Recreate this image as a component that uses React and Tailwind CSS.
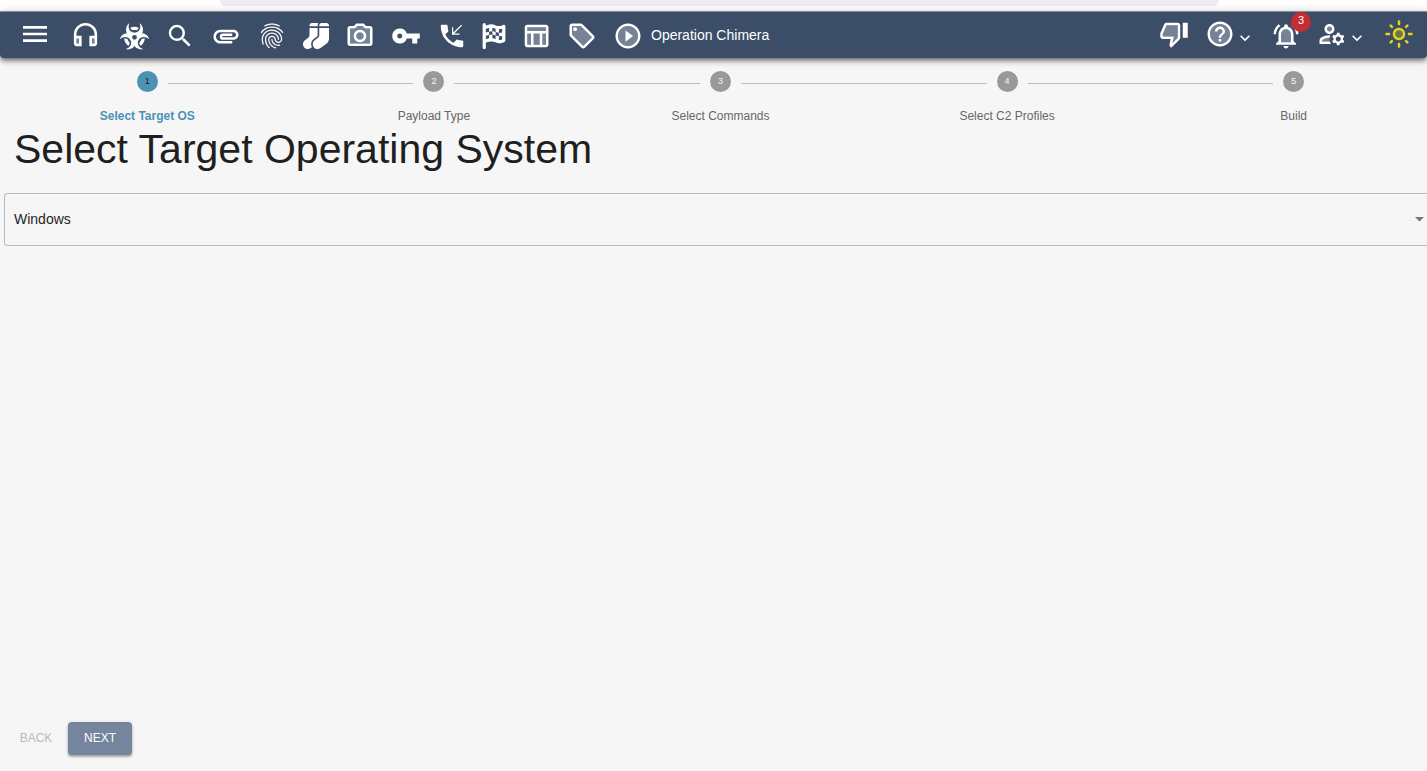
import React from "react";
import {
  MdMenu, MdOutlineHeadphones, MdSearch, MdAttachment, MdFingerprint, MdOutlineCameraAlt, MdVpnKey,
  MdPhoneCallback, MdOutlineTableChart, MdOutlineLocalOffer, MdPlayCircleOutline, MdOutlineThumbDown,
  MdHelpOutline, MdOutlineNotificationsActive, MdOutlineManageAccounts, MdOutlineLightMode, MdExpandMore,
} from "react-icons/md";
import { FaBiohazard, FaSocks, FaFlagCheckered } from "react-icons/fa6";

function Duo({ icon: Icon, tint, size = 30 }) {
  return (
    <svg width={size} height={size} viewBox="0 0 24 24" fill="currentColor" aria-hidden="true">
      <path d={tint} opacity="0.3" />
      <Icon size={24} />
    </svg>
  );
}

const disc = "M12 4a8 8 0 1 0 0 16 8 8 0 0 0 0-16z";

const tools = [
  { label: "Search", width: "w-[46px]", icon: <MdSearch size={30} /> },
  { label: "Files", width: "w-[46px]", icon: <MdAttachment size={30} /> },
  { label: "Artifacts", width: "w-[46px]", icon: <MdFingerprint size={30} /> },
  { label: "Proxies", width: "w-[42px]", icon: <FaSocks size={26} /> },
  { label: "Screenshots", width: "w-[46px]", icon: <Duo icon={MdOutlineCameraAlt} tint="M20 6h-4.05l-1.83-2H9.88L8.05 6H4v12h16V6z" /> },
  { label: "Credentials", width: "w-[46px]", icon: <MdVpnKey size={30} /> },
  { label: "Callbacks", width: "w-[46px]", icon: <MdPhoneCallback size={30} /> },
  { label: "Reporting", width: "w-[38px]", icon: <FaFlagCheckered size={26} /> },
  { label: "Attack matrix", width: "w-[46px]", icon: <Duo icon={MdOutlineTableChart} tint="M5 5h15v14H5z" /> },
  { label: "Tags", width: "w-[46px]", icon: <Duo icon={MdOutlineLocalOffer} tint="M11 4H4v7l9 9.01L20 13z" /> },
  { label: "Event feed", width: "w-[46px]", icon: <Duo icon={MdPlayCircleOutline} tint={disc} /> },
];

const steps = ["Select Target OS", "Payload Type", "Select Commands", "Select C2 Profiles", "Build"];

function IconButton({ label, width, children }) {
  return (
    <button type="button" aria-label={label} className={`flex shrink-0 items-center justify-center ${width}`}>
      {children}
    </button>
  );
}

function NavBar() {
  return (
    <header className="relative flex h-[47px] items-center rounded-b border-t border-[#8b9098] bg-[#3c4d67] pt-0.5 text-white shadow-[0_2px_4px_-1px_rgba(0,0,0,0.45),0_4px_5px_rgba(0,0,0,0.2),0_1px_10px_rgba(0,0,0,0.2)]">
      <nav className="flex items-center pl-3">
        <div className="flex items-center pb-1">
          <IconButton label="Menu" width="w-[46px]"><MdMenu size={32} /></IconButton>
          <IconButton label="Payloads" width="w-[54px]">
            <Duo icon={MdOutlineHeadphones} size={31} tint="M5 15h2v4H5zM17 15h2v4h-2z" />
          </IconButton>
        </div>
        <IconButton label="Hazards" width="w-[45px]"><FaBiohazard size={29} /></IconButton>
        {tools.map((t) => (
          <IconButton key={t.label} label={t.label} width={t.width}>{t.icon}</IconButton>
        ))}
      </nav>
      <a href="#operation" className="whitespace-nowrap pb-0.5 text-sm">Operation Chimera</a>
      <div className="ml-auto flex items-center pb-1 pr-1">
        <IconButton label="Feedback" width="w-[46px]">
          <Duo icon={MdOutlineThumbDown} tint="M3 12v2h9l-1.34 5.34L15 15V5H6z" />
        </IconButton>
        <button type="button" aria-label="Help" className="flex w-[66px] items-center justify-center">
          <Duo icon={MdHelpOutline} tint={disc} />
          <MdExpandMore size={20} className="mt-2" />
        </button>
        <button type="button" aria-label="Notifications, 3 new" className="relative flex w-[46px] justify-center pt-1">
          <Duo icon={MdOutlineNotificationsActive} tint="M12 6.5c-2.49 0-4 2.02-4 4.5v6h8v-6c0-2.48-1.51-4.5-4-4.5z" />
          <span className="absolute -right-0.5 -top-[5px] flex h-5 w-5 justify-center rounded-full bg-[#c52d32] text-[11px] leading-4">3</span>
        </button>
        <button type="button" aria-label="Account" className="flex w-[66px] items-center justify-center">
          <Duo icon={MdOutlineManageAccounts} tint="M10 6a2 2 0 1 0 0 4 2 2 0 0 0 0-4zM4.35 15.62A.98.98 0 0 0 4 16.48V18h6.08a7 7 0 0 1 .63-4.97c-2.55-.24-4.85 1.37-6.36 2.59z" />
          <MdExpandMore size={20} className="mt-2" />
        </button>
        <button type="button" aria-label="Toggle theme" className="flex w-12 justify-center text-[#e8d11c]">
          <Duo icon={MdOutlineLightMode} tint="M12 9a3 3 0 1 0 0 6 3 3 0 0 0 0-6z" />
        </button>
      </div>
    </header>
  );
}

function Stepper() {
  const line = "mt-1 h-px flex-1";
  return (
    <ol className="-mr-[10px] flex pl-1 pt-[13px]">
      {steps.map((s, i) => (
        <li key={s} className="flex-1" aria-current={i === 0 ? "step" : undefined}>
          <div className="flex items-center gap-[10px]">
            <span className={i === 0 ? line : `${line} bg-[#bdbdbd]`} />
            <span className={i === 0
              ? "flex h-[21px] w-[21px] items-center justify-center rounded-full bg-[#4b92b5] text-[9px] text-[#1c1c1c]"
              : "flex h-[21px] w-[21px] items-center justify-center rounded-full bg-[#999999] text-[9px] text-[#f5f5f5]"}>
              {i + 1}
            </span>
            <span className={i === steps.length - 1 ? line : `${line} bg-[#bdbdbd]`} />
          </div>
          <p className={i === 0
            ? "mt-4 text-center text-xs font-bold text-[#4b92b5]"
            : "mt-4 text-center text-xs text-[#666666]"}>
            {s}
          </p>
        </li>
      ))}
    </ol>
  );
}

export default function App() {
  return (
    <div className="flex min-h-screen flex-col overflow-hidden bg-[#f6f6f6] font-['Liberation_Sans',Arial,sans-serif] text-[#1f1f1f]">
      <div className="h-[11px] bg-white pl-[220px] pr-[208px]">
        <div className="h-[6px] rounded-b-lg bg-[#ececf1]" />
      </div>
      <NavBar />
      <main className="flex flex-1 flex-col">
        <Stepper />
        <h1 className="pl-[14px] pt-px text-[41px] leading-[48px]">Select Target Operating System</h1>
        <div className="relative ml-1 mt-5">
          <select aria-label="Target operating system" defaultValue="Windows" className="h-[53px] w-full appearance-none rounded-l border border-r-0 border-[#bababa] bg-transparent pb-0.5 pl-[9px] pr-6 text-sm">
            <option>Windows</option>
            <option>Linux</option>
            <option>macOS</option>
          </select>
          <svg className="pointer-events-none absolute right-[3px] top-6" width="9" height="5" viewBox="0 0 9 5" fill="#757575" aria-hidden="true">
            <path d="M0 0h9L4.500 4.500z" />
          </svg>
        </div>
        <div className="mt-auto flex pb-4 pl-1">
          <button type="button" disabled className="h-[33px] w-16 rounded pb-0.5 text-xs text-[#bababa]">BACK</button>
          <button type="button" className="h-[33px] w-16 rounded bg-[#75859d] pb-0.5 text-xs text-white shadow-[0_2px_2px_rgba(0,0,0,0.25),0_1px_4px_rgba(0,0,0,0.15)]">NEXT</button>
        </div>
      </main>
    </div>
  );
}
